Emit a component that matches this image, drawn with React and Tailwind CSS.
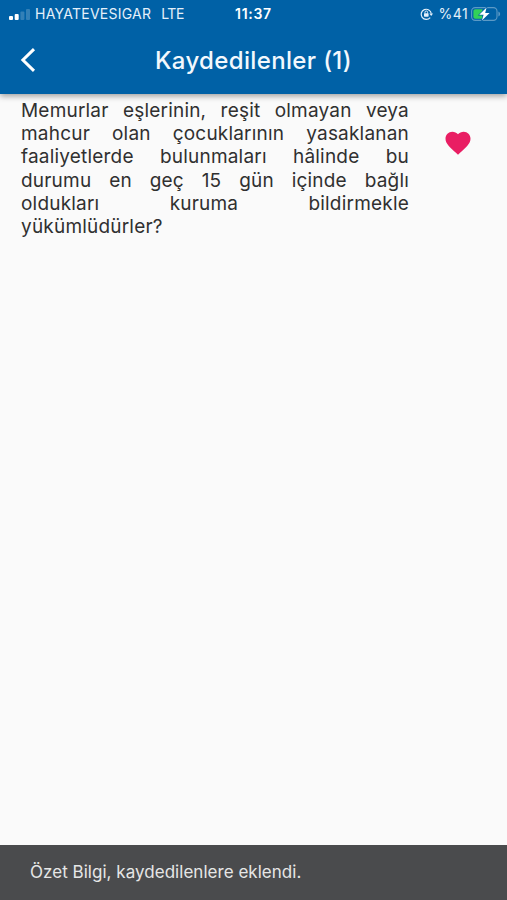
const SignalBars = () => (
  <svg className="h-[11px] w-[22px]" viewBox="0 0 22 11" fill="#fff">
    <rect x="0" y="7" width="4" height="4" rx="1" />
    <rect x="5.7" y="5" width="4" height="6" rx="1" />
    <rect x="11.4" y="2.5" width="4" height="8.5" rx="1" opacity="0.2" />
    <rect x="17" y="0" width="4" height="11" rx="1" opacity="0.2" />
  </svg>
);

const RotationLock = () => (
  <svg className="h-[14px] w-[14px]" viewBox="0 0 14 14" fill="none" stroke="#e4f0fa">
    <path d="M10.2 10.6A5.1 5.1 0 1 1 11.3 6.6" strokeWidth="1.2" />
    <path d="M9.3 6.4h3.8l-1.9 2.7z" fill="#e4f0fa" stroke="none" />
    <rect x="4" y="6.3" width="4.6" height="3.4" rx="0.6" fill="#e4f0fa" stroke="none" />
    <path d="M5 6.5V5.3a1.3 1.3 0 0 1 2.6 0v1.2" strokeWidth="1" />
  </svg>
);

const Battery = () => (
  <svg className="h-[16px] w-[30px]" viewBox="0 0 30 16" fill="none">
    <rect x="0.6" y="1.6" width="25.4" height="12.8" rx="3.6" stroke="#fff" strokeOpacity="0.36" strokeWidth="1.1" />
    <path d="M27.4 5.5c1.1.4 1.7 1.4 1.7 2.5s-.6 2.1-1.7 2.5z" fill="#fff" fillOpacity="0.36" />
    <path d="M4.2 3.3h7.2v9.4H4.2a1.8 1.8 0 0 1-1.8-1.8V5.1a1.8 1.8 0 0 1 1.8-1.8z" fill="#32d158" />
    <path d="M15.6 1.4 8.2 8.8h4.4l-1.7 5.8L18.6 7h-4.4z" fill="#fff" stroke="#0061a6" strokeWidth="1.2" paintOrder="stroke" />
  </svg>
);

const StatusBar = () => (
  <div className="grid h-7 grid-cols-[1fr_auto_1fr] items-center pr-[6px] pl-[9px] text-[14px] leading-7 text-[#e4f0fa]">
    <div className="flex items-center">
      <SignalBars />
      <span className="ml-[4px] text-[14px] tracking-[0.25px]">HAYATEVESIGAR</span>
      <span className="ml-[10px] text-[14px] tracking-[-0.5px]">LTE</span>
    </div>
    <span className="-ml-[3px] font-semibold tracking-[0.7px] text-white">11:37</span>
    <div className="flex items-center justify-end">
      <RotationLock />
      <span className="mr-[3px] ml-[5px] text-[14px] tracking-[0.4px]">%41</span>
      <Battery />
    </div>
  </div>
);

const Header = () => (
  <header className="z-10 h-[94px] shrink-0 bg-[#0061a6] shadow-[0_2px_6px_rgba(0,0,0,0.38)]">
    <StatusBar />
    <div className="grid h-[64px] grid-cols-[56px_1fr_56px] items-center">
      <button className="pl-[20px]" aria-label="Geri">
        <svg className="h-6 w-4" viewBox="0 0 16 24" fill="none" stroke="#fff" strokeWidth="3">
          <path d="M14 1.2 2.9 12 14 22.8" />
        </svg>
      </button>
      <h1 className="pt-px text-center text-[24px] font-medium tracking-[0.35px] text-[#f2f8fd]">
        Kaydedilenler (1)
      </h1>
    </div>
  </header>
);

const SavedItem = () => (
  <div className="flex items-start pt-[5px] pl-[21px]">
    <p className="w-[388px] text-justify text-[19px] leading-[23.2px] tracking-[0.2px] text-[#303030]">
      Memurlar eşlerinin, reşit olmayan veya mahcur olan çocuklarının yasaklanan
      faaliyetlerde bulunmaları hâlinde bu durumu en geç 15 gün içinde bağlı
      oldukları kuruma bildirmekle yükümlüdürler?
    </p>
    <button className="mt-[29px] ml-[34px]" aria-label="Kaydedildi">
      <svg className="h-[30px] w-[30px]" viewBox="0 0 24 24" fill="#e91e63">
        <path d="M12 21.35l-1.45-1.32C5.4 15.36 2 12.28 2 8.5 2 5.42 4.42 3 7.5 3c1.74 0 3.41.81 4.5 2.09C13.09 3.81 14.76 3 16.5 3 19.58 3 22 5.42 22 8.5c0 3.78-3.4 6.86-8.55 11.54L12 21.35z" />
      </svg>
    </button>
  </div>
);

const Snackbar = () => (
  <div className="flex h-[55px] shrink-0 items-center bg-[#4a4b4d] pl-[30px] text-[17px] tracking-[0.03px] text-[#e6e6e6]">
    Özet Bilgi, kaydedilenlere eklendi.
  </div>
);

export default function App() {
  return (
    <div className="flex h-[900px] w-[507px] flex-col overflow-hidden bg-[#fafafa] font-['Inter','Liberation_Sans',sans-serif]">
      <Header />
      <main className="flex-1">
        <SavedItem />
      </main>
      <Snackbar />
    </div>
  );
}
